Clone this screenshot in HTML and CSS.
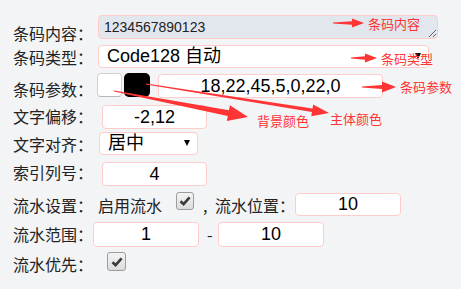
FILE: index.html
```html
<!DOCTYPE html>
<html lang="zh-CN">
<head>
  <meta charset="UTF-8" />
  <title>条码设置</title>
  <link rel="stylesheet" href="styles.css">
</head>
<body>
  <div class="panel">
    <form class="barcode-form">
      <div class="row row-content">
        <span class="label">条码内容：</span>
        <textarea class="field field-content" rows="1">1234567890123</textarea>
      </div>

      <div class="row row-type">
        <span class="label">条码类型：</span>
        <span class="select-wrap select-type">
          <select class="field"><option>Code128 自动</option></select>
        </span>
      </div>

      <div class="row row-params">
        <span class="label">条码参数：</span>
        <span class="swatch swatch-bg"></span>
        <span class="swatch swatch-fg"></span>
        <input class="field field-params" type="text" value="18,22,45,5,0,22,0">
      </div>

      <div class="row row-offset">
        <span class="label">文字偏移：</span>
        <input class="field field-small" type="text" value="-2,12">
      </div>

      <div class="row row-align">
        <span class="label">文字对齐：</span>
        <span class="select-wrap select-align">
          <select class="field"><option>居中</option></select>
        </span>
      </div>

      <div class="row row-index">
        <span class="label">索引列号：</span>
        <input class="field field-small" type="text" value="4">
      </div>

      <div class="row row-serial">
        <span class="label">流水设置：</span>
        <span class="text serial-enable">启用流水</span>
        <span class="check check-enable">
          <svg width="12" height="12" viewBox="0 0 12 12"><path d="M1.5 6.2 L4.6 9.2 L10.6 2.4" fill="none" stroke="#3a3a3a" stroke-width="2.6"/></svg>
        </span>
        <span class="text serial-comma">,</span>
        <span class="text serial-pos">流水位置：</span>
        <input class="field field-pos" type="text" value="10">
      </div>

      <div class="row row-range">
        <span class="label">流水范围：</span>
        <input class="field field-range" type="text" value="1">
        <span class="text range-dash">-</span>
        <input class="field field-range" type="text" value="10">
      </div>

      <div class="row row-first">
        <span class="label">流水优先：</span>
        <span class="check check-first">
          <svg width="12" height="12" viewBox="0 0 12 12"><path d="M1.5 6.2 L4.6 9.2 L10.6 2.4" fill="none" stroke="#3a3a3a" stroke-width="2.6"/></svg>
        </span>
      </div>
    </form>

    <!-- screenshot annotations -->
    <svg class="notes" width="461" height="289" viewBox="0 0 461 289">
      <g fill="#ff3535">
        <polygon points="333,22.5 352,21.2 352,18.6 364,23 352,27.4 352,24.8 333,23.5"/>
        <polygon points="351,57.5 365,56.2 365,53.6 377,58 365,62.4 365,59.8 351,58.5"/>
        <polygon points="362,86.5 382,85 382,81.5 396,87 382,92.5 382,89 362,87.5"/>
        <polygon points="113.9,91.5 227.8,116.1 226.8,121 248,117 229.9,105.3 228.9,110.2 114.1,90.5"/>
        <polygon points="145.9,84.4 311.9,112.1 311.3,116.3 329,113 313.2,104.4 312.5,108.6 146.1,83.6"/>
      </g>
      <g class="note-text">
        <text x="368" y="29">条码内容</text>
        <text x="381" y="64">条码类型</text>
        <text x="400" y="92">条码参数</text>
        <text x="257" y="126">背景颜色</text>
        <text x="330" y="124">主体颜色</text>
      </g>
    </svg>
  </div>
</body>
</html>
```

FILE: styles.css
```css
body {
  margin: 0;
  background-color: #f3f4f6;
  font-family: "Noto Sans CJK SC", sans-serif;
  color: #222;
}

.panel {
  position: relative;
  width: 461px;
  height: 289px;
  overflow: hidden;
}

.barcode-form {
  padding: 15px 0 0 13px;
}

.row {
  display: flex;
  align-items: flex-start;
}

.label,
.text {
  font-size: 16px;
  line-height: 20px;
  white-space: nowrap;
}

.label {
  width: 80px;
  flex: none;
}

.field {
  box-sizing: border-box;
  margin: 0;
  padding: 0;
  border: 1px solid #fcc;
  border-radius: 4px;
  background-color: #fff;
  font-family: "Liberation Sans", "Noto Sans CJK SC", sans-serif;
  font-size: 18px;
  color: #000;
  text-align: center;
  outline: none;
}

/* row 1 */
.row-content { height: 30px; }
.row-content .label { margin-top: 8px; }

.field-content {
  width: 340px;
  height: 24px;
  margin-left: 5px;
  padding: 0 5px;
  background-color: #e2e7ee;
  font-size: 14px;
  line-height: 22px;
  text-align: left;
  color: #222;
  overflow: hidden;
  resize: both;
}

/* selects */
.select-wrap {
  position: relative;
  display: block;
}

.select-wrap select {
  display: block;
  width: 100%;
  height: 23px;
  padding-left: 8px;
  line-height: 21px;
  text-align: left;
  appearance: none;
  -webkit-appearance: none;
}

.select-wrap::after {
  content: "";
  position: absolute;
  right: 8px;
  top: 8px;
  border-left: 3.5px solid transparent;
  border-right: 3.5px solid transparent;
  border-top: 6px solid #000;
}

.row-type { height: 28px; }
.row-type .label { margin-top: 2px; }
.select-type { width: 331px; margin-left: 5px; }

/* row 3 */
.row-params { height: 32px; }
.row-params .label { margin-top: 6px; }

.swatch {
  box-sizing: border-box;
  height: 24px;
  border-radius: 4px;
}

.swatch-bg {
  width: 25px;
  margin-left: 4px;
  background-color: #fff;
  border: 1px solid #d2d2d2;
  border-bottom-color: #b8b8b8;
}

.swatch-fg {
  width: 26px;
  margin-left: 2px;
  background-color: #000;
  border-radius: 5px;
}

.field-params {
  width: 225px;
  height: 24px;
  margin: 1px 0 0 8px;
}

.field-small {
  width: 105px;
  height: 24px;
  margin-left: 9px;
}

.row-offset { height: 27px; }
.row-offset .label { margin-top: 1px; }

.row-align { height: 30px; }
.row-align .label { margin-top: 2px; }
.select-align { width: 99px; margin-left: 6px; }

.row-index { height: 30px; }

/* serial rows */
.row-serial { height: 30px; }
.row-serial .label,
.row-serial .text { margin-top: 3px; }

.serial-enable { margin-left: 5px; }

.check {
  box-sizing: border-box;
  display: flex;
  align-items: center;
  justify-content: center;
  width: 18px;
  height: 18px;
  border: 1px solid #9c9c9c;
  border-radius: 3px;
  background: linear-gradient(#f4f4f4, #dcdcdc);
}

.check-enable { margin-left: 14px; }

.serial-comma {
  width: 12px;
  margin-left: 9px;
}

.field-pos {
  width: 106px;
  height: 23px;
  margin-top: 1px;
}

.row-range { height: 30px; }
.row-range .label,
.row-range .text { margin-top: 2px; }

.field-range {
  width: 106px;
  height: 25px;
}

.range-dash {
  width: 11px;
  margin-left: 8px;
}

.row-first .label { margin-top: 2px; }

.check-first {
  width: 19px;
  height: 19px;
  margin-left: 14px;
}

/* annotation overlay */
.notes {
  position: absolute;
  top: 0;
  left: 0;
  pointer-events: none;
}

.note-text {
  font-family: "Noto Sans CJK SC", sans-serif;
  font-size: 13px;
  fill: #ff3535;
}
```
